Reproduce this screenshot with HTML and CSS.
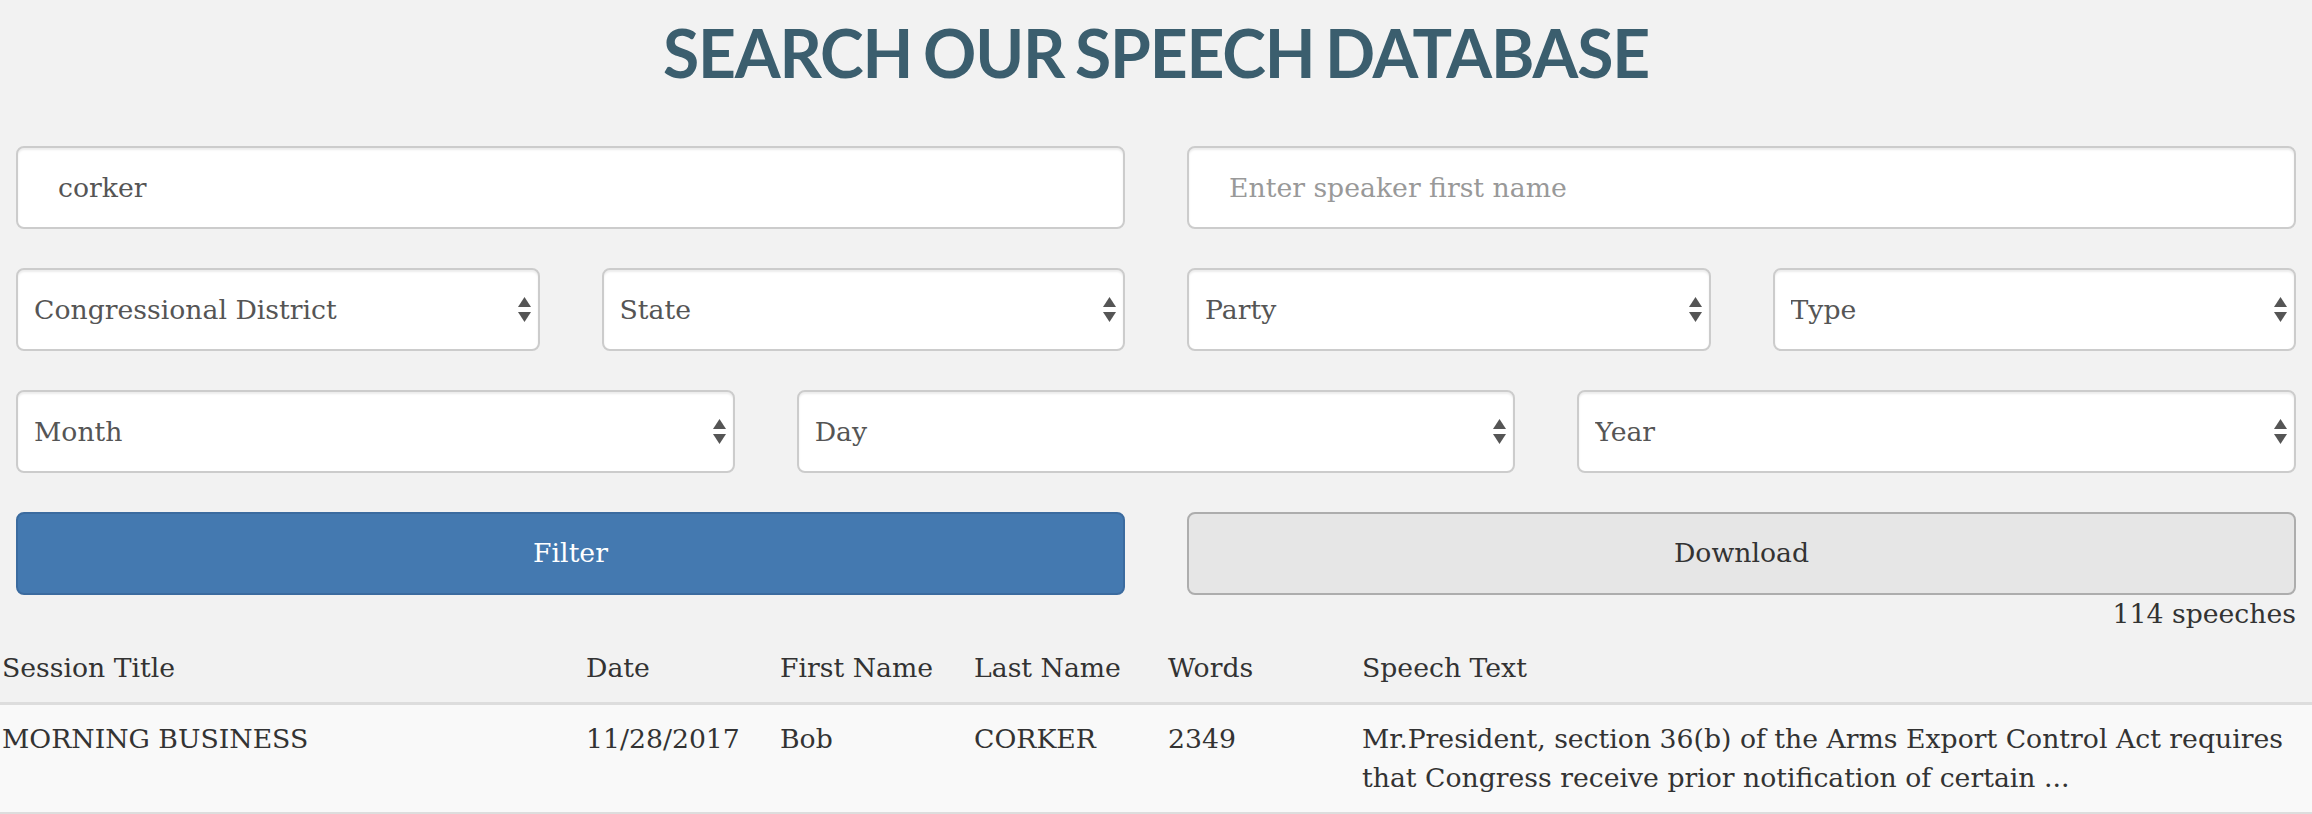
FILE: index.html
```html
<!DOCTYPE html>
<html lang="en">
<head>
<meta charset="utf-8">
<title>Search our speech database</title>
<link rel="stylesheet" href="styles.css">
</head>
<body>
<h1 class="page-title">SEARCH OUR SPEECH DATABASE</h1>
<form class="search-form">
  <div class="form-row cols-2">
    <input class="form-control text-input" type="text" value="corker">
    <input class="form-control text-input" type="text" placeholder="Enter speaker first name">
  </div>
  <div class="form-row cols-4">
    <div class="select-wrap">
      <select class="form-control select"><option>Congressional District</option></select>
      <svg class="select-arrows" width="13" height="26" viewBox="0 0 13 26"><polygon points="6.5,0 13,10 0,10"/><polygon points="0,15 13,15 6.5,25"/></svg>
    </div>
    <div class="select-wrap">
      <select class="form-control select"><option>State</option></select>
      <svg class="select-arrows" width="13" height="26" viewBox="0 0 13 26"><polygon points="6.5,0 13,10 0,10"/><polygon points="0,15 13,15 6.5,25"/></svg>
    </div>
    <div class="select-wrap">
      <select class="form-control select"><option>Party</option></select>
      <svg class="select-arrows" width="13" height="26" viewBox="0 0 13 26"><polygon points="6.5,0 13,10 0,10"/><polygon points="0,15 13,15 6.5,25"/></svg>
    </div>
    <div class="select-wrap">
      <select class="form-control select"><option>Type</option></select>
      <svg class="select-arrows" width="13" height="26" viewBox="0 0 13 26"><polygon points="6.5,0 13,10 0,10"/><polygon points="0,15 13,15 6.5,25"/></svg>
    </div>
  </div>
  <div class="form-row cols-3">
    <div class="select-wrap">
      <select class="form-control select"><option>Month</option></select>
      <svg class="select-arrows" width="13" height="26" viewBox="0 0 13 26"><polygon points="6.5,0 13,10 0,10"/><polygon points="0,15 13,15 6.5,25"/></svg>
    </div>
    <div class="select-wrap">
      <select class="form-control select"><option>Day</option></select>
      <svg class="select-arrows" width="13" height="26" viewBox="0 0 13 26"><polygon points="6.5,0 13,10 0,10"/><polygon points="0,15 13,15 6.5,25"/></svg>
    </div>
    <div class="select-wrap">
      <select class="form-control select"><option>Year</option></select>
      <svg class="select-arrows" width="13" height="26" viewBox="0 0 13 26"><polygon points="6.5,0 13,10 0,10"/><polygon points="0,15 13,15 6.5,25"/></svg>
    </div>
  </div>
  <div class="form-row cols-2 last">
    <button type="button" class="btn btn-primary">Filter</button>
    <button type="button" class="btn btn-default">Download</button>
  </div>
  <div class="result-count">114 speeches</div>
</form>
<table class="speech-table">
  <colgroup>
    <col class="c-title"><col class="c-small"><col class="c-small"><col class="c-small"><col class="c-small"><col>
  </colgroup>
  <thead>
    <tr>
      <th>Session Title</th><th>Date</th><th>First Name</th><th>Last Name</th><th>Words</th><th>Speech Text</th>
    </tr>
  </thead>
  <tbody>
    <tr>
      <td>MORNING BUSINESS</td><td>11/28/2017</td><td>Bob</td><td>CORKER</td><td>2349</td>
      <td>Mr.President, section 36(b) of the Arms Export Control Act requires that Congress receive prior notification of certain ...</td>
    </tr>
  </tbody>
</table>
</body>
</html>
```

FILE: styles.css
```css
* { box-sizing: border-box; }

html, body {
  margin: 0;
  padding: 0;
}

body {
  background: #f2f2f2;
  font-family: "DejaVu Serif", "Liberation Serif", serif;
  font-size: 26.7px;
  line-height: 38.5px;
  color: #333;
  overflow: hidden;
}

.page-title {
  margin: 16px 0 57px;
  font-family: Lato, "Liberation Sans", sans-serif;
  font-weight: 700;
  font-size: 66px;
  line-height: 73px;
  letter-spacing: -1.2px;
  word-spacing: -4px;
  text-align: center;
  color: #3b5e6e;
}

.search-form {
  padding: 0 16px;
  margin: 0;
}

.form-row {
  display: grid;
  column-gap: 62px;
  margin-bottom: 39px;
}
.form-row.last { margin-bottom: 0; }
.cols-2 { grid-template-columns: 1fr 1fr; }
.cols-3 { grid-template-columns: 1fr 1fr 1fr; }
.cols-4 { grid-template-columns: 1fr 1fr 1fr 1fr; }

.form-control {
  display: block;
  width: 100%;
  height: 83px;
  margin: 0;
  background: #fff;
  border: 2px solid #ccc;
  border-radius: 8px;
  box-shadow: inset 0 2px 2px rgba(0, 0, 0, 0.075);
  font-family: "DejaVu Serif", "Liberation Serif", serif;
  font-size: 26.7px;
  color: #555;
  outline: none;
}

.text-input {
  padding: 0 20px 0 40px;
}
.text-input::placeholder {
  color: #999;
  opacity: 1;
}

.select-wrap {
  position: relative;
}
.select {
  -webkit-appearance: none;
  appearance: none;
  padding: 0 40px 0 16px;
}
.select-arrows {
  position: absolute;
  right: 9px;
  top: 29px;
  fill: #555;
  pointer-events: none;
}

.btn {
  display: block;
  width: 100%;
  height: 83px;
  margin: 0;
  border: 2px solid;
  border-radius: 8px;
  font-family: "DejaVu Serif", "Liberation Serif", serif;
  font-size: 26.7px;
  line-height: 38.5px;
  text-align: center;
  cursor: pointer;
}
.btn-primary {
  background: #4479b0;
  border-color: #3b6b9f;
  color: #fff;
}
.btn-default {
  background: #e6e6e6;
  border-color: #adadad;
  color: #333;
}

.result-count {
  text-align: right;
  color: #333;
}

.speech-table {
  width: 100%;
  border-collapse: collapse;
  table-layout: fixed;
}
.c-title { width: 584px; }
.c-small { width: 194px; }

.speech-table th,
.speech-table td {
  padding: 15px 2px;
  text-align: left;
  vertical-align: top;
  font-weight: 400;
}
.speech-table thead th {
  border-bottom: 3px solid #ddd;
}
.speech-table tbody td {
  background: #f9f9f9;
  border-bottom: 2px solid #ddd;
}
```
